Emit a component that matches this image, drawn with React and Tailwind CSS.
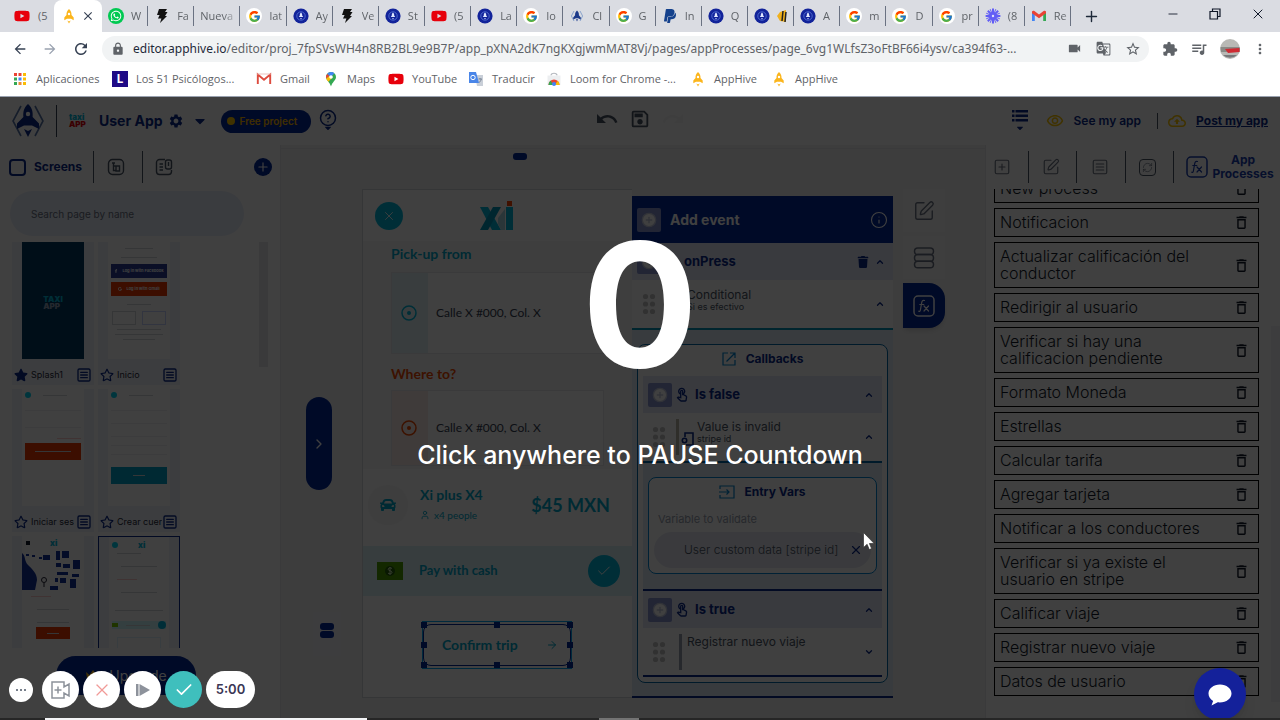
import { useState } from "react";
import { FaYoutube, FaWhatsapp, FaPaypal, FaCar, FaCaretDown, FaStar, FaRegStar, FaTrash, FaFacebookF, FaGoogle } from "react-icons/fa";
import { FcGoogle } from "react-icons/fc";
import {
  MdLock,
  MdVideocam,
  MdGTranslate,
  MdStarBorder,
  MdExtension,
  MdQueueMusic,
  MdMoreVert,
  MdUndo,
  MdRedo,
  MdOutlineSave,
  MdSettings,
  MdDeleteOutline,
  MdOutlineTouchApp,
  MdOutlineVisibility,
  MdOutlineBackup,
  MdArrowBack,
  MdArrowForward,
  MdRefresh,
  MdClose,
} from "react-icons/md";
import {
  ArrowRight,
  Check,
  ChevronDown,
  ChevronRight,
  ChevronUp,
  CircleHelp,
  CirclePlus,
  Info,
  Minus,
  Plus,
  RefreshCw,
  SquareMenu,
  SquarePen,
  SquarePlus,
  User,
  X,
} from "lucide-react";

const YouTube = () => <FaYoutube className="size-4 text-red-600" />;

const Google = () => (
  <span className="flex size-4 items-center justify-center rounded-full bg-white">
    <FcGoogle className="size-[13px]" />
  </span>
);

const Rocket = () => (
  <svg viewBox="0 0 16 16" className="size-4">
    <path d="M8 1C5.8 2.8 5.4 5 5.5 7L3.3 9.6v2.6L6 10.8h4l2.7 1.4V9.6L10.5 7C10.6 5 10.2 2.8 8 1z" fill="#fbb51c" />
    <circle cx="8" cy="6" r="1.2" fill="#fff" />
    <path d="M6.3 12.5L8 15.6l1.7-3.1L8 13.4z" fill="#fbb51c" />
  </svg>
);

const Bolt = () => (
  <svg viewBox="0 0 16 16" className="size-4">
    <path d="M5 1h8l-2 3h2.5L11 8h2L6 15l1.4-4.6H4L5.6 7H3z" fill="#111" />
  </svg>
);

const Hive = () => (
  <svg viewBox="0 0 16 16" className="size-4">
    <circle cx="8" cy="8" r="7.6" fill="#12239a" />
    <circle cx="8" cy="8" r="4.2" fill="none" stroke="#5b77d8" strokeWidth="0.8" />
    <path d="M8 4.6c-1.1 1-1.3 2-1.2 3L5.8 9h4.4l-1-1.4c.1-1-.1-2-1.2-3zM7.2 10h1.6L8 11.6z" fill="#dfe7ff" />
  </svg>
);

const HiveLight = () => (
  <svg viewBox="0 0 16 16" className="size-4">
    <path d="M5 3L2.4 8 5 13M11 3l2.6 5L11 13" fill="none" stroke="#8aa4cc" strokeWidth="1" />
    <path d="M8 2.5C6.3 4 6 5.6 6.1 7.2L4.2 9.6v1.8L7 10.2h2l2.8 1.2V9.6L9.9 7.2C10 5.6 9.7 4 8 2.5zM7 11.2h2l-1 2.3z" fill="#1c3a8a" />
  </svg>
);

const WhatsApp = () => (
  <span className="flex size-4 items-center justify-center rounded-full bg-green-500">
    <FaWhatsapp className="size-3 text-white" />
  </span>
);

const Burst = () => (
  <svg viewBox="0 0 16 16" className="size-4" stroke="#625df5" strokeWidth="2">
    <path d="M8 .6v14.8M.6 8h14.8M2.8 2.8l10.4 10.4M13.2 2.8L2.8 13.2" />
    <path d="M5.2 1.2l5.6 13.6M1.2 5.2l13.6 5.6M10.8 1.2L5.2 14.8M14.8 5.2L1.2 10.8" strokeWidth="1" />
    <circle cx="8" cy="8" r="2.2" fill="#dfe0fb" />
  </svg>
);

const Gmail = () => (
  <svg viewBox="0 0 16 16" className="size-4">
    <path d="M1 4v9h2.8V6.6z" fill="#4285f4" />
    <path d="M15 4v9h-2.8V6.6z" fill="#34a853" />
    <path d="M1 3.4C1.6 2.4 2.8 2.6 3.4 3L8 6.6 12.6 3c.6-.4 1.8-.6 2.4.4v1.8L8 10.2 1 5.2z" fill="#ea4335" />
  </svg>
);

const GmailOld = () => (
  <svg viewBox="0 0 16 16" className="size-4">
    <path d="M1.8 13V3.6L8 8.8l6.2-5.2V13" fill="none" stroke="#dd4b3e" strokeWidth="1.9" />
    <path d="M1 3h14" stroke="#e9b5b0" strokeWidth="0.8" />
  </svg>
);

const Maps = () => (
  <svg viewBox="0 0 16 16" className="size-4">
    <path d="M8 1a5 5 0 0 0-5 5c0 3.5 3.8 5 5 9.4C9.2 11 13 9.5 13 6a5 5 0 0 0-5-5z" fill="#34a853" />
    <path d="M8 1a5 5 0 0 0-3.9 1.9L8 6l3.4-3.7A5 5 0 0 0 8 1z" fill="#4285f4" />
    <path d="M4.1 2.9A5 5 0 0 0 3 6c0 .5.1 1 .2 1.4L6.5 5z" fill="#ea4335" />
    <path d="M3.2 7.4c.5 1.3 1.3 2.2 2.2 3.3L9.8 6 6.5 5z" fill="#fbbc04" />
    <circle cx="8" cy="6" r="1.8" fill="#fff" />
  </svg>
);

const Translate = () => (
  <svg viewBox="0 0 16 16" className="size-4">
    <path d="M7 4h8v11H9z" fill="#c9cfd8" />
    <path d="M1 1h7l3 11H1z" fill="#4a86e8" />
    <circle cx="5" cy="6.5" r="2.2" fill="none" stroke="#fff" strokeWidth="1" />
    <path d="M10.5 8h3.5M12 7v1M11 11.5c1.5-.8 2-2 2.2-3.5" stroke="#6d7a8c" strokeWidth="0.8" fill="none" />
  </svg>
);

const WebStore = () => (
  <svg viewBox="0 0 16 16" className="size-4">
    <path d="M5 4.5C5 1.5 11 1.5 11 4.5" fill="none" stroke="#b6bac0" strokeWidth="1.2" />
    <path d="M1.5 4.5h13V14h-13z" fill="#eceef0" />
    <path d="M2.5 14a5.5 5.5 0 0 1 11 0z" fill="#ea4335" />
    <path d="M2.5 14a5.5 5.5 0 0 1 2.2-4.4L7 14z" fill="#34a853" />
    <path d="M13.5 14a5.5 5.5 0 0 0-2-4.2L9 14z" fill="#fbbc04" />
    <circle cx="8" cy="13" r="2" fill="#4285f4" />
  </svg>
);

const AppsGrid = () => (
  <svg viewBox="0 0 16 16" className="size-4">
    {["#ea4335", "#ea4335", "#fbbc04", "#34a853", "#4285f4", "#fbbc04", "#34a853", "#ea8a35", "#fbbc04"].map((c, i) => (
      <rect key={i} x={2 + (i % 3) * 4.5} y={2 + Math.floor(i / 3) * 4.5} width="3" height="3" fill={c} />
    ))}
  </svg>
);

const LetterL = () => (
  <span className="flex size-4 items-center justify-center bg-[#1f0a86] text-xs font-bold text-white">L</span>
);

const Bee = () => (
  <svg viewBox="0 0 10 16" className="h-4 w-[10px]">
    <path d="M9 2L3 4 0 8l3 5 6 1z" fill="#f0b01c" />
    <path d="M6 3L5 13M9 4L8 14" stroke="#222" strokeWidth="1.5" />
  </svg>
);

const tabs = [
  { icon: WhatsApp, text: "W" },
  { icon: Bolt, text: "Fa" },
  { icon: null, text: "Nueva" },
  { icon: Google, text: "lat" },
  { icon: Hive, text: "Ay" },
  { icon: Bolt, text: "Ve" },
  { icon: Hive, text: "St" },
  { icon: YouTube, text: "(5" },
  { icon: Hive, text: "La" },
  { icon: Google, text: "Io" },
  { icon: HiveLight, text: "Cl" },
  { icon: Google, text: "G" },
  { icon: () => <FaPaypal className="size-4 text-[#14418c]" />, text: "In" },
  { icon: Hive, text: "Q" },
  { icon: Hive, text: null },
  { icon: Hive, text: "A" },
  { icon: Google, text: "m" },
  { icon: Google, text: "D" },
  { icon: Google, text: "pr" },
  { icon: Burst, text: "(8" },
  { icon: Gmail, text: "Re" },
];

const bookmarks = [
  { icon: AppsGrid, text: "Aplicaciones", width: "w-[100px]" },
  { icon: LetterL, text: "Los 51 Psicólogos...", width: "w-36" },
  { icon: GmailOld, text: "Gmail", width: "w-[67px]" },
  { icon: Maps, text: "Maps", width: "w-[65px]" },
  { icon: YouTube, text: "YouTube", width: "w-20" },
  { icon: Translate, text: "Traducir", width: "w-[78px]" },
  { icon: WebStore, text: "Loom for Chrome -...", width: "w-36" },
  { icon: Rocket, text: "AppHive", width: "w-[81px]" },
  { icon: Rocket, text: "AppHive", width: "w-[81px]" },
];

const processes = [
  "New process",
  "Notificacion",
  "Actualizar calificación del conductor",
  "Redirigir al usuario",
  "Verificar si hay una calificacion pendiente",
  "Formato Moneda",
  "Estrellas",
  "Calcular tarifa",
  "Agregar tarjeta",
  "Notificar a los conductores",
  "Verificar si ya existe el usuario en stripe",
  "Calificar viaje",
  "Registrar nuevo viaje",
  "Datos de usuario",
];

function Browser() {
  return (
    <div className="shrink-0 bg-white font-['Open_Sans',sans-serif] text-[11px] text-[#5f6368]">
      <div className="flex h-8 items-center bg-[#dadce2]">
        <button className="flex w-[54px] items-center gap-2 pl-[14px]">
          <YouTube />
          <span>(5</span>
        </button>
        <div className="flex h-full w-12 items-center gap-1 rounded-t-lg bg-white pl-[7px]">
          <Rocket />
          <button aria-label="Close tab">
            <MdClose className="size-[14px] text-gray-700" />
          </button>
        </div>
        <div className="flex w-[969px] min-w-0">
          {tabs.map((tab, i) => (
            <button key={i} className="flex h-5 flex-1 items-center gap-[7px] overflow-hidden border-r border-gray-500 pl-[6px]">
              {tab.icon && (
                <span className="shrink-0">
                  <tab.icon />
                </span>
              )}
              {tab.text ? (
                <span className="w-full overflow-hidden mask-r-from-60% pr-1 text-left">{tab.text}</span>
              ) : (
                <Bee />
              )}
            </button>
          ))}
        </div>
        <button aria-label="New tab" className="ml-3">
          <Plus className="size-[17px] text-gray-800" />
        </button>
        <div className="mb-1 ml-auto flex items-center gap-7 pr-[14px] text-gray-900">
          <button aria-label="Minimize">
            <Minus className="size-[14px]" strokeWidth={1.5} />
          </button>
          <button aria-label="Restore">
            <svg viewBox="0 0 14 14" className="size-[14px]" fill="none" stroke="currentColor" strokeWidth="1.2">
              <path d="M2 4.5h7.5V12H2zM4.5 4.5V2H12v7.5H9.5" />
            </svg>
          </button>
          <button aria-label="Close">
            <X className="size-4" strokeWidth={1.5} />
          </button>
        </div>
      </div>
      <div className="flex h-[33px] items-center pl-3">
        <div className="flex gap-[13px]">
          <button aria-label="Back">
            <MdArrowBack className="size-4 text-gray-700" />
          </button>
          <button aria-label="Forward" className="px-[1px]">
            <MdArrowForward className="size-4 text-gray-400" />
          </button>
          <button aria-label="Reload">
            <MdRefresh className="size-[18px] text-gray-700" />
          </button>
        </div>
        <div className="ml-3 flex h-[26px] min-w-0 flex-1 items-center gap-2 rounded-full bg-[#f1f3f4] pr-2 pl-[9px]">
          <MdLock className="size-[14px] shrink-0" />
          <p className="min-w-0 flex-1 font-['Noto_Sans',sans-serif] text-xs whitespace-nowrap">
            <span className="text-gray-800">editor.apphive.io</span>
            /editor/proj_7fpSVsWH4n8RB2BL9e9B7P/app_pXNA2dK7ngKXgjwmMAT8Vj/pages/appProcesses/page_6vg1WLfsZ3oFtBF66i4ysv/ca394f63-...
          </p>
          <div className="flex items-center gap-[14px]">
            <MdVideocam className="size-[15px]" />
            <MdGTranslate className="size-[15px]" />
            <MdStarBorder className="size-4" />
          </div>
        </div>
        <div className="flex items-center gap-3 pr-3 pl-[13px]">
          <MdExtension className="size-4" />
          <MdQueueMusic className="size-[18px]" />
          <svg viewBox="0 0 20 20" className="size-5">
            <circle cx="10" cy="10" r="10" fill="#b9b9b5" />
            <path d="M.5 8h19c.6 2 .6 3.5 0 5H1z" fill="#8a8a86" />
            <path d="M5 10l14.5-1v4L8 14z" fill="#cf2b33" />
            <path d="M3 16h14a10 10 0 0 1-14 0z" fill="#77787a" />
          </svg>
          <MdMoreVert className="size-4" />
        </div>
      </div>
      <nav className="flex h-8 items-center border-b border-gray-400 pb-[3px] pl-3">
        {bookmarks.map((b, i) => (
          <a key={i} href="#" className={`flex shrink-0 items-center gap-2 whitespace-nowrap ${b.width}`}>
            <span className="shrink-0">
              <b.icon />
            </span>
            {b.text}
          </a>
        ))}
      </nav>
    </div>
  );
}

function FxIcon({ className }) {
  return (
    <svg viewBox="0 0 22 22" className={className} fill="none" stroke="currentColor" strokeWidth="1.5" strokeLinecap="round">
      <rect x="1" y="1" width="20" height="20" rx="4" />
      <path d="M11.5 5.5c-2-.8-2.6.8-2.9 2.6L7.400 15c-.2 1.200-.8 1.500-1.700 1.200M6.800 9.500h4M11 11l4.500 5M15.500 11L11 16" strokeWidth="1.2" />
    </svg>
  );
}

function Divider() {
  return <span className="h-8 w-px shrink-0 bg-gray-600" />;
}

function Header() {
  return (
    <header className="flex h-12 shrink-0 items-center bg-white text-[#0a2a8c]">
      <div className="flex flex-1 items-center pl-3">
        <svg viewBox="0 0 32 36" className="h-9 w-8">
          <path d="M9 3L1 18l8 15M23 3l8 15-8 15" fill="none" stroke="#5673a8" strokeWidth="1.6" />
          <path d="M16 1c-4.5 4-5 8.5-4.6 13L5 20.5V26l7-3.5h8l7 3.5v-5.5L20.6 14C21 9.5 20.5 5 16 1z" fill="#0a2a8c" />
          <circle cx="16" cy="11" r="2.2" fill="#fff" />
          <path d="M12 26l4 2 4-2-4 8z" fill="#0a2a8c" />
        </svg>
        <span className="mr-3 ml-3 h-8 w-px bg-gray-700" />
        <span className="flex w-[18px] flex-col text-[8px] leading-[7px] font-black text-red-600">
          <span className="text-cyan-500">taxi</span>
          <span>APP</span>
        </span>
        <h1 className="ml-3 text-sm leading-5 font-bold">User App</h1>
        <button aria-label="Settings" className="ml-[5px]">
          <MdSettings className="size-4" />
        </button>
        <button aria-label="Choose app" className="ml-[6px]">
          <FaCaretDown className="h-4 w-5" />
        </button>
        <span className="ml-[11px] flex h-[23px] items-center gap-[5px] rounded-full bg-[#00289a] px-[6px] text-[10px] font-semibold text-amber-400">
          <span className="size-2 rounded-full bg-yellow-400" />
          <span className="pr-2">Free project</span>
        </span>
        <button aria-label="Help" className="ml-2 flex flex-col items-center">
          <CircleHelp className="size-[18px]" />
          <FaCaretDown className="-mt-1 size-[10px]" />
        </button>
      </div>
      <div className="flex items-center gap-[10px] pb-1 text-gray-600">
        <button aria-label="Undo">
          <MdUndo className="h-6 w-6" />
        </button>
        <button aria-label="Save">
          <MdOutlineSave className="size-[22px]" />
        </button>
        <button aria-label="Redo" disabled className="opacity-5">
          <MdRedo className="h-6 w-6" />
        </button>
      </div>
      <div className="flex flex-1 items-center justify-end pr-3 text-xs font-semibold">
        <button aria-label="Menu" className="mr-[18px] flex flex-col items-center">
          <svg viewBox="0 0 16 14" className="h-[14px] w-4" fill="currentColor">
            <path d="M0 1h2.5v2.5H0zM3.5 1H16v2.5H3.5zM0 5.5h2.5V8H0zM3.5 5.5H16V8H3.5zM0 10h2.5v2.5H0zM3.5 10H16v2.5H3.5z" />
          </svg>
          <FaCaretDown className="size-[10px]" />
        </button>
        <a href="#" className="flex items-center gap-[10px]">
          <MdOutlineVisibility className="size-[18px] text-yellow-400" />
          See my app
        </a>
        <span className="mr-[10px] ml-4 h-4 w-px bg-gray-600" />
        <a href="#" className="flex items-center gap-[10px]">
          <MdOutlineBackup className="size-[18px] text-yellow-400" />
          <span className="font-bold underline">Post my app</span>
        </a>
      </div>
    </header>
  );
}

function Line({ className }) {
  return <span className={`block h-px shrink-0 bg-gray-300 ${className}`} />;
}

function SplashThumb() {
  return (
    <div className="flex h-full items-center justify-center bg-[#003a60] pt-1">
      <span className="text-[8px] leading-[7px] font-black text-slate-400">
        <span className="block text-cyan-500">TAXI</span>APP
      </span>
    </div>
  );
}

function HomeThumb() {
  return (
    <div className="flex h-full flex-col items-center bg-white px-[3px] pt-[6px]">
      <Line className="w-7" />
      <Line className="mt-2 w-9" />
      <span className="mt-[6px] flex h-[14px] w-full items-center justify-center gap-1 bg-[#2c3f98] text-[4px] font-bold text-white">
        <FaFacebookF /> Log in with Facebook
      </span>
      <span className="mt-1 flex h-[14px] w-full items-center justify-center gap-1 bg-[#ee3a00] text-[4px] font-bold text-white">
        <FaGoogle /> Log in with Gmail
      </span>
      <Line className="mt-2 w-6" />
      <div className="mt-[6px] flex gap-[6px]">
        <span className="h-[14px] w-6 border border-gray-300" />
        <span className="h-[14px] w-6 border border-indigo-200" />
      </div>
      <Line className="mt-1 w-11" />
      <Line className="mt-1 w-12" />
      <Line className="mt-1 w-8" />
    </div>
  );
}

function LoginThumb() {
  return (
    <div className="flex h-full flex-col items-center bg-white px-[3px] pt-[3px]">
      <div className="flex w-full items-center gap-3">
        <span className="size-[6px] rounded-full bg-cyan-400" />
        <Line className="w-6" />
      </div>
      <Line className="mt-3 w-full opacity-40" />
      <Line className="mt-4 w-full opacity-40" />
      <span className="mt-[10px] ml-auto block h-px w-6 bg-red-200" />
      <span className="mt-1 flex h-[17px] w-full items-center justify-center bg-[#ee3a00]">
        <Line className="w-9" />
      </span>
    </div>
  );
}

function SignupThumb() {
  return (
    <div className="flex h-full flex-col items-center bg-white px-[3px] pt-[3px]">
      <div className="flex w-full items-center gap-3">
        <span className="size-[6px] rounded-full bg-cyan-400" />
        <Line className="w-6" />
      </div>
      <Line className="mt-3 w-full opacity-40" />
      <Line className="mt-3 w-full opacity-40" />
      <Line className="mt-3 w-full opacity-40" />
      <Line className="mt-2 w-full opacity-40" />
      <Line className="mt-2 w-full opacity-40" />
      <span className="mt-3 flex h-[17px] w-full items-center justify-center bg-[#00a4cc]">
        <Line className="w-3" />
      </span>
    </div>
  );
}

function MapThumb() {
  return (
    <div className="flex h-full flex-col items-center bg-white">
      <div className="flex h-[14px] w-full shrink-0 items-center gap-5 px-1">
        <span className="h-1 w-1 bg-gray-900" />
        <span className="text-[8px] leading-[8px] font-black text-cyan-500">xi</span>
      </div>
      <svg viewBox="0 0 62 40" className="h-10 w-full shrink-0" fill="#12309c">
        <path d="M0 3c4 3 2 8 6 12s9 8 9 15l-2 10H0zM21 5h7v5h-7zM34 1h4v9h-4zM40 1h7v7h-7zM34 13h5v4h-5zM41 14h7v4h-7zM51 10h7v9h-7zM35 22h11v3H35zM50 24h7v3h-7zM33 28h3v4h-3zM38 28h6v5h-6zM48 29h6v9h-6zM28 36h8v4h-8zM4 4h3v2H4zM10 5h3v2h-3zM17 7h3v2h-3z" />
        <circle cx="22" cy="30" r="2.5" fill="none" stroke="#223" />
        <path d="M22 33v4" stroke="#223" />
      </svg>
      <span className="mt-[6px] mr-6 block h-px w-5 shrink-0 bg-red-200" />
      <Line className="mt-3 w-8" />
      <Line className="mt-3 w-8" />
      <span className="mt-1 flex h-3 w-[34px] shrink-0 items-center justify-center bg-[#ee3a00]">
        <Line className="w-3" />
      </span>
    </div>
  );
}

function TripThumb() {
  return (
    <div className="flex h-full flex-col items-center bg-white px-[3px] pt-1">
      <div className="flex w-full items-center gap-5">
        <span className="size-[6px] rounded-full bg-cyan-400" />
        <span className="text-[8px] leading-[8px] font-black text-cyan-500">xi</span>
      </div>
      <Line className="mt-1 mr-5 w-6" />
      <Line className="mt-3 w-9" />
      <span className="mt-3 mr-6 block h-px w-5 shrink-0 bg-red-200" />
      <Line className="mt-3 w-9" />
      <Line className="mt-[17px] w-12" />
      <div className="mt-[10px] flex w-full shrink-0 items-center justify-between bg-cyan-100">
        <span className="h-1 w-[6px] bg-lime-500" />
        <Line className="w-6" />
        <span className="size-2 rounded-full bg-[#00b4dc]" />
      </div>
      <span className="mt-2 h-3 w-11 shrink-0 border border-sky-100" />
    </div>
  );
}

const screens = [
  { name: "Splash1", thumb: SplashThumb, starred: true },
  { name: "Inicio", thumb: HomeThumb },
  { name: "Iniciar ses", thumb: LoginThumb },
  { name: "Crear cuer", thumb: SignupThumb },
  { name: "", thumb: MapThumb },
  { name: "", thumb: TripThumb, active: true },
];

function ScreensPanel() {
  return (
    <aside className="flex w-[281px] shrink-0 flex-col border-r border-gray-200 bg-white">
      <div className="flex h-11 shrink-0 items-center pl-[9px] text-gray-600">
        <span className="size-[17px] rounded-[4px] border-2 border-[#0a2a8c]" />
        <h2 className="ml-2 w-[59px] text-xs font-bold text-[#0a2a8c]">Screens</h2>
        <Divider />
        <button aria-label="Components" className="mr-[17px] ml-[13px]">
          <svg viewBox="0 0 18 18" className="size-[18px]" fill="none" stroke="currentColor" strokeWidth="1.4">
            <rect x="1.5" y="1.5" width="15" height="15" rx="4" />
            <path d="M5 5h3M6.5 5v7.5H9M9 8h3.5v5H9zM6.5 8H9" />
          </svg>
        </button>
        <Divider />
        <button aria-label="Forms" className="ml-3">
          <svg viewBox="0 0 18 18" className="size-[18px]" fill="none" stroke="currentColor" strokeWidth="1.4">
            <path d="M10 1.5H4.5a3 3 0 0 0-3 3v9a3 3 0 0 0 3 3h9a3 3 0 0 0 3-3V12M4.5 6H8M4.5 9H8M4.5 12H8" />
            <rect x="10.5" y="2" width="6" height="9" rx="2" />
            <path d="M13.5 4v4" />
          </svg>
        </button>
        <button aria-label="New screen" className="mr-2 ml-auto flex size-[18px] items-center justify-center rounded-full bg-[#00289a] text-white">
          <Plus className="size-[14px]" />
        </button>
      </div>
      <div className="shrink-0 px-[10px] pt-[2px]">
        <input
          aria-label="Search page by name"
          placeholder="Search page by name"
          className="h-[45px] w-[234px] rounded-full bg-[#e8edfa] px-[21px] text-[10px] placeholder:text-gray-500"
        />
      </div>
      <div className="mt-[6px] flex min-h-0 flex-1 justify-between overflow-hidden pr-3 pl-3">
        <div className="grid h-[406px] grid-cols-[82px_82px] content-start gap-x-1 gap-y-1 overflow-hidden">
          {screens.map((s, i) => (
            <div
              key={i}
              className={`flex h-[143px] flex-col bg-[#f0f3fb] ${s.active ? "border border-[#0a2a8c]" : ""}`}
            >
              <div className="mx-[10px] h-[117px] shrink-0 overflow-hidden">
                <s.thumb />
              </div>
              <div className="mt-auto flex h-5 items-center px-[2px] text-[#0a2a8c]">
                {s.starred ? <FaStar className="size-[14px] shrink-0" /> : <FaRegStar className="size-[14px] shrink-0" />}
                <span className="ml-[3px] flex-1 overflow-hidden text-[9px] whitespace-nowrap text-gray-800">{s.name}</span>
                <SquareMenu className="size-4 shrink-0" />
              </div>
            </div>
          ))}
        </div>
        <span className="h-[125px] w-[9px] bg-gray-200" />
      </div>
      <div className="flex h-[62px] shrink-0 justify-center pr-7">
        <button className="flex h-[39px] w-[140px] items-center justify-center gap-2 rounded-[20px] bg-[#00289a] text-sm text-white">
          <svg viewBox="0 0 16 12" className="h-3 w-4" fill="#fbbf24">
            <path d="M1 2l3.5 3L8 0l3.5 5L15 2l-1.5 9h-11z" />
          </svg>
          Upgrade
        </button>
      </div>
    </aside>
  );
}

function Target() {
  return (
    <svg viewBox="0 0 16 16" className="size-4" fill="none" stroke="currentColor" strokeWidth="1.5">
      <circle cx="8" cy="8" r="7" />
      <circle cx="8" cy="8" r="2" fill="currentColor" stroke="none" />
    </svg>
  );
}

function Handle({ className }) {
  return <span className={`absolute size-[6px] bg-[#00289a] ${className}`} />;
}

function Phone() {
  return (
    <div className="flex h-[509px] w-[270px] shrink-0 flex-col border-y border-l border-gray-300 bg-[#fdfdfd] font-['Lato',sans-serif]">
      <div className="flex h-[51px] items-center pl-3">
        <button aria-label="Close trip" className="flex size-7 items-center justify-center rounded-full bg-[#00b8dc] text-white">
          <X className="size-[14px]" strokeWidth={1.5} />
        </button>
        <svg viewBox="0 0 34 30" className="ml-[77px] h-[30px] w-[34px]">
          <path d="M0 6h8l13 23h-9z" fill="#00b8dc" />
          <path d="M13 6h8L8 29H0z" fill="#0099bd" />
          <path d="M18 17l7-9v21h-4l-3-6z" fill="#a9d8e4" />
          <path d="M26 6h7v23h-7z" fill="#00b8dc" />
          <path d="M27 0h5v5h-5z" fill="#ff4400" />
        </svg>
      </div>
      <div className="flex flex-col bg-[#f8f8f8] pr-7 pl-7">
        <h3 className="h-[31px] pt-[3px] text-sm leading-5 font-bold text-[#00a8cc]">Pick-up from</h3>
        <div className="flex h-[82px] items-center border border-gray-200 bg-[#fdfdfd]">
          <span className="flex h-full w-9 items-center justify-center bg-[#e2f3f8] pr-[3px] text-[#00b8dc]">
            <Target />
          </span>
          <span className="ml-2 text-xs text-gray-700">Calle X #000, Col. X</span>
        </div>
        <h3 className="h-[36px] pt-[10px] text-sm leading-5 font-bold text-[#f04800]">Where to?</h3>
        <div className="mb-[3px] flex h-[76px] items-center border border-gray-200 bg-[#fdfdfd]">
          <span className="flex h-full w-9 items-center justify-center bg-[#faebe6] pr-[3px] text-[#f04800]">
            <Target />
          </span>
          <span className="ml-2 text-xs text-gray-700">Calle X #000, Col. X</span>
        </div>
      </div>
      <div className="mb-[6px] flex h-[71px] items-center pr-[22px] pl-[5px]">
        <span className="flex size-10 items-center justify-center rounded-full bg-[#f6f6f6] text-[#00a8cc]">
          <FaCar className="size-4" />
        </span>
        <div className="ml-3 flex-1 text-[#00a8cc]">
          <p className="text-sm leading-5 font-bold">Xi plus X4</p>
          <p className="flex items-center gap-1 text-[10px] leading-5">
            <User className="size-[10px]" /> x4 people
          </p>
        </div>
        <p className="text-lg font-bold text-[#00a8cc]">$45 MXN</p>
      </div>
      <div className="flex h-[50px] items-center bg-[#dcf1f7] pr-3 pl-[14px]">
        <svg viewBox="0 0 26 18" className="h-[18px] w-[26px]">
          <path d="M0 0h26v18H0z" fill="#4ea000" />
          <circle cx="13" cy="9" r="5" fill="#24600a" />
          <path d="M15 6.5c-1-1-3.8-1-3.8.8s3.8 1.200 3.800 3-3 1.800-4 .8M13 5v8" stroke="#d8f0b8" fill="none" />
        </svg>
        <span className="ml-4 flex-1 text-[13px] font-bold text-[#00a8cc]">Pay with cash</span>
        <span className="flex size-8 items-center justify-center rounded-full bg-[#00b8dc] text-white">
          <Check className="size-4" strokeWidth={1.5} />
        </span>
      </div>
      <div className="relative mt-[25px] ml-[59px] h-12 w-[150px] border border-sky-500 py-[2px]">
        <button className="flex h-[42px] w-full items-center justify-between rounded-lg border border-[#00289a] pr-3 pl-[18px] text-sm font-bold text-[#00a8cc]">
          Confirm trip
          <ArrowRight className="size-3" />
        </button>
        <Handle className="top-0 -left-[2px]" />
        <Handle className="top-0 left-[71px]" />
        <Handle className="top-0 -right-[2px]" />
        <Handle className="top-5 -left-[2px]" />
        <Handle className="top-5 -right-[2px]" />
        <Handle className="bottom-0 -left-[2px]" />
        <Handle className="bottom-0 left-[71px]" />
        <Handle className="-right-[2px] bottom-0" />
      </div>
    </div>
  );
}

function AddButton({ label }) {
  return (
    <button aria-label={label} className="flex size-6 shrink-0 items-center justify-center rounded-[2px] bg-[#8795cf]">
      <CirclePlus className="size-4 fill-white text-[#c2c8dd]" />
    </button>
  );
}

function Dots() {
  return (
    <svg viewBox="0 0 14 22" className="h-[22px] w-[14px] shrink-0" fill="#c4c4c4">
      <circle cx="3.5" cy="3.5" r="2.6" />
      <circle cx="10.5" cy="3.5" r="2.6" />
      <circle cx="3.5" cy="11" r="2.6" />
      <circle cx="10.5" cy="11" r="2.6" />
      <circle cx="3.5" cy="18.5" r="2.6" />
      <circle cx="10.5" cy="18.5" r="2.6" />
    </svg>
  );
}

function CallbackHead({ title }) {
  return (
    <div className="flex h-[37px] items-center bg-[#e3e6f7] pr-2 pl-[5px]">
      <AddButton label={`Add to ${title}`} />
      <MdOutlineTouchApp className="ml-[2px] size-4" />
      <h4 className="ml-[5px] flex-1 text-[13px] font-bold">{title}</h4>
      <ChevronUp className="size-[10px]" strokeWidth={3} />
    </div>
  );
}

function EventPanel() {
  return (
    <section className="mt-[7px] flex w-[261px] shrink-0 flex-col bg-white text-[#0a2a8c]">
      <div className="flex h-[47px] items-center bg-[#00289a] px-[5px] text-white">
        <AddButton label="Add event" />
        <h3 className="ml-[9px] flex-1 text-sm font-bold">Add event</h3>
        <Info className="size-[18px]" strokeWidth={1.5} />
      </div>
      <div className="flex h-[37px] items-center bg-[#e3e6f7] pr-2 pl-[5px]">
        <AddButton label="Add to onPress" />
        <h3 className="ml-[23px] flex-1 text-[13px] font-bold">onPress</h3>
        <FaTrash className="size-3" />
        <ChevronUp className="ml-[6px] size-[10px]" strokeWidth={3} />
      </div>
      <div className="flex h-[50px] items-center border-b-2 border-cyan-600 pr-2 pl-[10px]">
        <Dots />
        <div className="ml-[31px] flex-1 pb-2 text-gray-600">
          <p className="text-xs leading-[13px]">Conditional</p>
          <p className="text-[9px] leading-[12px]">Si es efectivo</p>
        </div>
        <ChevronUp className="size-[10px]" strokeWidth={3} />
      </div>
      <div className="border-b-2 border-[#0a2a8c] bg-[#dfebf6] px-[5px] pt-[14px] pb-[13px]">
        <div className="flex flex-col rounded-lg border border-sky-700 bg-white px-[5px] pb-[5px]">
          <div className="flex h-[31px] items-center justify-center gap-[10px] pb-1 text-xs font-bold">
            <svg viewBox="0 0 14 14" className="size-[14px] text-sky-600" fill="none" stroke="currentColor" strokeWidth="1.2">
              <path d="M6 1H1v12h12V8M4.5 9.5L12.5 1.5M8 1h5v5" />
            </svg>
            Callbacks
          </div>
          <CallbackHead title="Is false" />
          <div className="flex h-[50px] items-center border-b-2 border-sky-700 pr-2 pl-[9px]">
            <Dots />
            <span className="ml-[10px] h-9 w-[3px] bg-[#bdb9a6]" />
            <svg viewBox="0 0 14 14" className="mt-1 ml-[2px] size-[14px]" fill="none" stroke="currentColor" strokeWidth="1.6">
              <path d="M4 5V1h8v12H5" />
              <circle cx="3.5" cy="8.5" r="2.2" />
            </svg>
            <div className="flex-1 pb-[10px] pl-[2px] text-gray-600">
              <p className="text-xs leading-[13px]">Value is invalid</p>
              <p className="text-[9px] leading-[12px]">stripe id</p>
            </div>
            <ChevronUp className="size-[10px]" strokeWidth={3} />
          </div>
          <div className="bg-[#dfebf6] px-[5px] pt-[14px] pb-[15px]">
            <div className="rounded-lg border border-sky-600 bg-white px-[5px] pb-[5px]">
              <div className="flex h-7 items-center justify-center gap-[9px] text-xs font-bold">
                <svg viewBox="0 0 16 14" className="h-[14px] w-4 text-sky-600" fill="none" stroke="currentColor" strokeWidth="1.2">
                  <path d="M1 4V1h14v12H1v-3M0 7h10M7.5 4.5L10 7 7.5 9.5" />
                </svg>
                Entry Vars
              </div>
              <p className="h-[26px] px-1 pt-[5px] text-[11px] text-gray-400">Variable to validate</p>
              <div className="flex h-9 items-center justify-between rounded-full bg-[#e6e8f2] pr-2 pl-[30px] text-xs font-light whitespace-nowrap text-gray-600">
                User custom data [stripe id]
                <button aria-label="Remove variable" className="text-[#0a2a8c]">
                  <X className="size-[14px]" />
                </button>
              </div>
            </div>
          </div>
          <div className="border-t-2 border-[#0a2a8c]">
            <CallbackHead title="Is true" />
          </div>
          <div className="flex h-[49px] items-center border-b-2 border-[#0a2a8c] pr-2 pl-[9px]">
            <Dots />
            <span className="mr-[5px] ml-[13px] h-9 w-[3px] bg-gray-400" />
            <p className="flex-1 pb-5 text-xs text-gray-600">Registrar nuevo viaje</p>
            <ChevronDown className="size-[10px]" strokeWidth={3} />
          </div>
        </div>
      </div>
    </section>
  );
}

function Canvas() {
  return (
    <main className="flex min-w-0 flex-1 flex-col bg-[#f4f4f4]">
      <div className="mt-[3px] flex h-[41px] shrink-0 justify-center border-t border-gray-200 pr-[226px] pt-1">
        <span className="h-[7px] w-[14px] rounded-[3px] bg-[#00289a]" />
      </div>
      <div className="flex">
        <div className="ml-[25px] w-14 shrink-0">
          <button aria-label="Open panel" className="mt-[208px] flex h-[93px] w-[26px] items-center justify-center rounded-full bg-[#00289a] text-white">
            <ChevronRight className="size-4" />
          </button>
          <div className="mt-[122px] ml-[7px] flex h-11 w-7 flex-col items-center gap-[1px] bg-gray-100 pt-[11px]">
            <span className="h-[7px] w-[14px] rounded-[3px] bg-[#00289a]" />
            <span className="h-[7px] w-[14px] rounded-[3px] bg-[#00289a]" />
          </div>
        </div>
        <Phone />
        <EventPanel />
        <div className="ml-[10px] flex flex-col gap-1 text-gray-500">
          <button aria-label="Edit" className="flex h-[43px] w-[42px] items-center justify-center bg-[#f8f8f8]">
            <SquarePen className="size-[22px]" strokeWidth={1.5} />
          </button>
          <button aria-label="Data" className="flex h-[43px] w-[42px] items-center justify-center bg-[#f8f8f8]">
            <svg viewBox="0 0 22 22" className="size-[22px]" fill="none" stroke="currentColor" strokeWidth="1.5">
              <rect x="1.5" y="1" width="19" height="6.600" rx="3.300" />
              <rect x="1.5" y="7.600" width="19" height="6.600" rx="3.300" />
              <rect x="1.5" y="14.200" width="19" height="6.600" rx="3.300" />
            </svg>
          </button>
          <button aria-label="Functions" className="flex h-[45px] w-[42px] items-center justify-center rounded-r-2xl bg-[#00289a] text-white shadow-md">
            <FxIcon className="size-[22px]" />
          </button>
        </div>
      </div>
    </main>
  );
}

function ProcessPanel() {
  return (
    <aside className="flex w-[295px] shrink-0 flex-col border-l border-gray-200 bg-white text-gray-500">
      <div className="flex h-11 shrink-0 items-center pl-[7px]">
        <button aria-label="Add" className="mr-[17px]">
          <SquarePlus className="size-[18px]" strokeWidth={1.5} />
        </button>
        <Divider />
        <button aria-label="Edit element" className="mr-4 ml-[13px]">
          <SquarePen className="size-[18px]" strokeWidth={1.5} />
        </button>
        <Divider />
        <button aria-label="Lists" className="mr-4 ml-[14px]">
          <SquareMenu className="size-[18px]" strokeWidth={1.5} />
        </button>
        <Divider />
        <button aria-label="Sync" className="mr-[17px] ml-[13px] flex size-[17px] items-center justify-center rounded-[4px] border border-gray-600">
          <RefreshCw className="size-[11px]" strokeWidth={1.5} />
        </button>
        <Divider />
        <button className="ml-3 flex items-center gap-1 font-bold text-[#1a3fb0]">
          <FxIcon className="size-[22px]" />
          <span className="w-[62px] text-center text-xs leading-[14px]">App Processes</span>
        </button>
      </div>
      <div className="flex min-h-0 flex-1 justify-between overflow-hidden pl-2">
        <ul className="-mt-[15px] flex w-[265px] flex-col gap-[5px] font-light text-gray-900">
          {processes.map((name) => (
            <li key={name} className="flex items-center justify-between border border-black py-[5px] pr-2 pl-[5px]">
              <span className="max-w-[210px] text-base leading-[17px]">{name}</span>
              <button aria-label={`Delete ${name}`}>
                <MdDeleteOutline className="size-[17px]" />
              </button>
            </li>
          ))}
        </ul>
        <span className="mt-[137px] mb-4 w-[9px] bg-gray-100" />
      </div>
    </aside>
  );
}

function Recorder({ paused, onPause }) {
  return (
    <div className="absolute bottom-[10px] left-[9px] flex items-center gap-1 text-gray-500">
      <button aria-label="More" className="mr-[5px] flex size-6 items-center justify-center gap-[2px] rounded-full bg-white">
        <span className="size-[2px] rounded-full bg-gray-600" />
        <span className="size-[2px] rounded-full bg-gray-600" />
        <span className="size-[2px] rounded-full bg-gray-600" />
      </button>
      <button aria-label="Camera" className="flex size-[37px] items-center justify-center rounded-full bg-white">
        <svg viewBox="0 0 20 20" className="size-5" fill="none" stroke="#8d929b" strokeWidth="1.5">
          <path d="M1 2h12v5l5-3v12l-5-3v5H1zM7 6.5v7M3.5 10h7" />
        </svg>
      </button>
      <button aria-label="Cancel" className="flex size-[37px] items-center justify-center rounded-full bg-white">
        <X className="size-5 text-[#f19a97]" strokeWidth={1.5} />
      </button>
      <button aria-label={paused ? "Resume" : "Pause"} onClick={onPause} className="flex size-[37px] items-center justify-center rounded-full bg-white">
        <svg viewBox="0 0 14 14" className="size-[14px]" fill="#8d929b">
          <path d="M0 1h2.5v12H0zM3.5 1L14 7 3.5 13z" />
        </svg>
      </button>
      <button aria-label="Finish" className="flex size-[37px] items-center justify-center rounded-full bg-[#3fbfbd] text-white">
        <Check className="size-5" />
      </button>
      <span className="flex h-[37px] w-[49px] items-center justify-center rounded-full bg-white text-[13px] font-semibold text-[#3b3654]">5:00</span>
    </div>
  );
}

export default function App() {
  const [paused, setPaused] = useState(false);

  return (
    <div className="flex h-screen flex-col overflow-hidden font-['Inter',sans-serif]">
      <Browser />
      <div className="relative flex min-h-0 flex-1 flex-col overflow-hidden">
        <Header />
        <div className="flex min-h-0 flex-1">
          <ScreensPanel />
          <Canvas />
          <ProcessPanel />
        </div>

        <div className="absolute inset-0 flex flex-col items-center bg-black/75 pt-[121px] text-white" onClick={() => setPaused(!paused)}>
          <p className="text-[172px] leading-[172px] font-bold">0</p>
          <p className="mt-[47px] text-[25px] leading-9 font-medium">Click anywhere to PAUSE Countdown</p>
        </div>

        <svg viewBox="0 0 12 19" className="absolute top-[435px] left-[863px] h-[19px] w-3">
          <path d="M.5.5v15l3.6-3.2 2.2 5.3 2.3-1-2.2-5.1h4.8z" fill="#fff" stroke="#333" strokeWidth="0.7" />
        </svg>

        <Recorder paused={paused} onPause={() => setPaused(!paused)} />

        <button aria-label="Chat" className="absolute right-[34px] -bottom-[2px] flex size-[52px] items-center justify-center rounded-full bg-[#14219a] shadow-lg">
          <svg viewBox="0 0 24 24" className="size-6" fill="#fff">
            <path d="M12 2.5C5.5 2.5.5 6.5.5 11.5c0 3.2 1.8 5.8 4.6 7.4L3.5 23.5l6.2-3.2c8 .8 13.8-3.4 13.8-8.8 0-5-5-9-11.5-9z" />
          </svg>
        </button>
      </div>
      <div className="flex h-[2px] shrink-0 bg-neutral-800">
        <span className="ml-[45px] w-[322px] bg-gray-100" />
        <span className="ml-[232px] w-10 bg-neutral-500" />
      </div>
    </div>
  );
}
